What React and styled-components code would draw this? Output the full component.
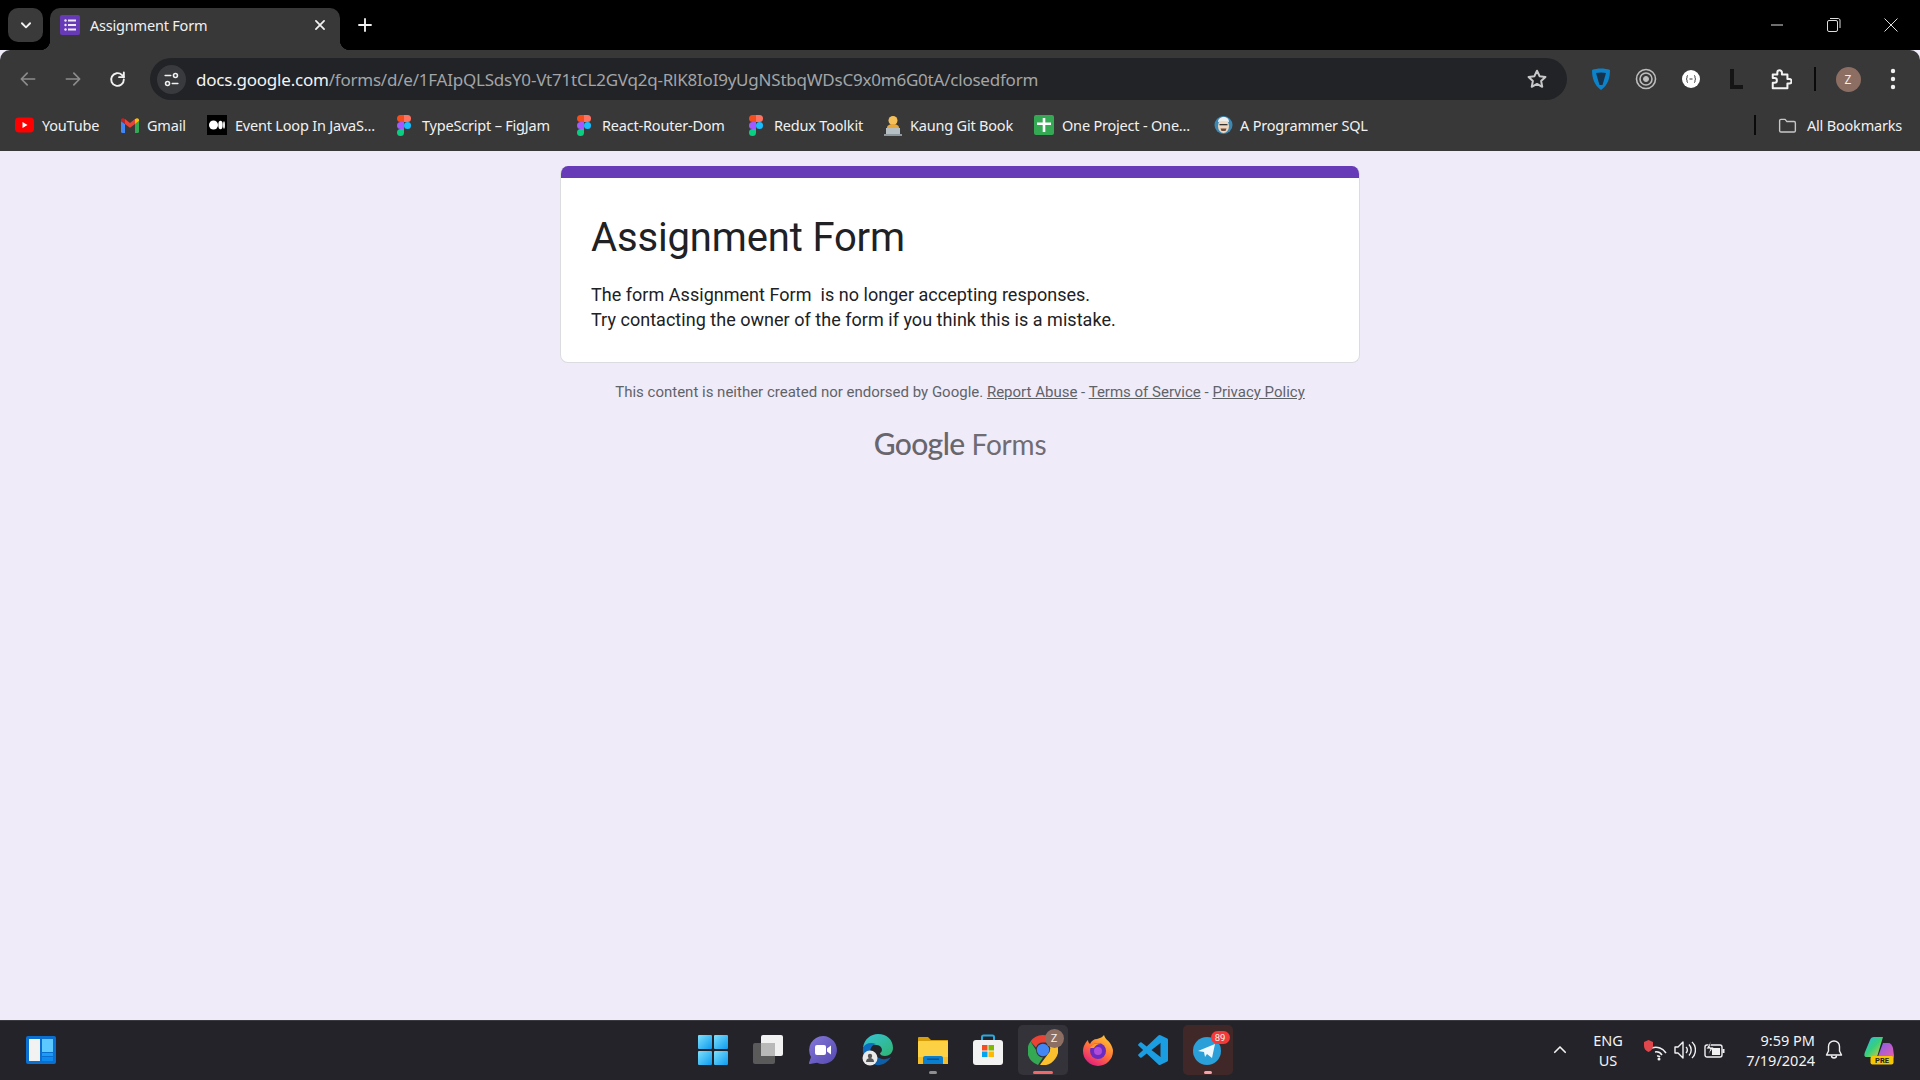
import React from "react";
import styled, { createGlobalStyle } from "styled-components";

const Global = createGlobalStyle`
  html, body { margin: 0; padding: 0; background: #f0ebf8; }
  * { box-sizing: border-box; }
`;
const UI = `"Noto Sans", "Open Sans", sans-serif`;

const Screen = styled.div`
  width: 1920px; height: 1080px; overflow: hidden; display: flex; flex-direction: column;
`;
const TabStrip = styled.div`
  height: 50px; background: #000; display: flex; align-items: flex-start; padding: 8px 0 0 8px; flex: none;
`;
const TabMenu = styled.div`
  width: 35px; height: 34px; border-radius: 10px; background: #3a3a3a; display: flex; align-items: center; justify-content: center; margin-right: 7px;
`;
const Tab = styled.div`
  width: 290px; height: 42px; background: #383838; border-radius: 10px 10px 0 0; display: flex; align-items: center; padding: 0 13px 8px 10px; position: relative;
  &::before, &::after { content: ""; position: absolute; bottom: 0; width: 10px; height: 10px; }
  &::before { left: -10px; background: radial-gradient(circle at 0 0, #000 10px, #383838 10.5px); }
  &::after { right: -10px; background: radial-gradient(circle at 100% 0, #000 10px, #383838 10.5px); }
`;
const TabTitle = styled.span`
  font: 14.5px ${UI}; color: #f1f1f1; margin-left: 10px; flex: 1; letter-spacing: -0.2px;
`;
const NewTab = styled.div`
  width: 30px; height: 34px; margin-left: 10px; display: flex; align-items: center; justify-content: center;
`;
const WindowControls = styled.div`
  margin-left: auto; display: flex; height: 34px; align-items: center; padding-right: 1px;
`;
const WinButton = styled.div`
  width: 57px; display: flex; justify-content: center; align-items: center;
`;
const Chrome = styled.div`
  background: #383838; border-radius: 10px 10px 0 0; flex: none; height: 101px; display: flex; flex-direction: column;
`;
const Toolbar = styled.div`
  height: 58px; display: flex; align-items: center; padding: 8px 0; flex: none;
`;
const NavGroup = styled.div`
  width: 150px; display: flex; padding-left: 5px; flex: none;
`;
const NavButton = styled.div`
  width: 45px; display: flex; justify-content: center; align-items: center;
`;
const AddressBar = styled.div`
  width: 1417px; height: 42px; background: #212327; border-radius: 21px; display: flex; align-items: center; padding: 0 19px 0 7px; flex: none;
`;
const SiteChip = styled.div`
  width: 29px; height: 29px; border-radius: 50%; background: #383a3d; display: flex; align-items: center; justify-content: center; margin-right: 10px; flex: none;
`;
const Url = styled.div`
  font: 17px ${UI}; color: #a3a5a8; flex: 1; white-space: nowrap; letter-spacing: -0.22px;
  b { font-weight: 400; color: #f3f3f3; }
`;
const ExtRow = styled.div`
  display: flex; align-items: center; flex: 1; padding-left: 11px;
`;
const Ext = styled.div`
  width: ${p => p.$w || 45}px; display: flex; justify-content: center; align-items: center; flex: none;
`;
const Divider = styled.div`
  width: 2px; height: ${p => p.$h || 22}px; background: #0a0a0a; flex: none; margin-left: ${p => p.$ml || 0}px;
`;
const Avatar = styled.div`
  width: 25px; height: 25px; border-radius: 50%; background: #8d6e63; color: #f4eeee; font: 12px ${UI}; display: flex; align-items: center; justify-content: center;
`;
const BookmarkBar = styled.div`
  flex: 1; display: flex; align-items: center; padding: 0 18px 9px 15px; gap: 21px;
`;
const Bookmark = styled.div`
  display: flex; align-items: center; gap: ${p => p.$gap || 8}px; font: 14.5px ${UI}; letter-spacing: -0.2px; color: #f1f1f1; white-space: nowrap;
  width: ${p => p.$w}px; flex: none;
`;
const BookmarkEnd = styled.div`
  margin-left: auto; display: flex; align-items: center; gap: 21px;
`;
const Page = styled.main`
  flex: 1; background: #f0ebf8; display: flex; flex-direction: column; align-items: center; padding-top: 15px; font-family: Roboto, sans-serif;
`;
const Card = styled.section`
  width: 800px; height: 197px; background: #fff; border: 1px solid #dadce0; border-top: 0; border-radius: 8px; overflow: hidden; flex: none;
`;
const CardBar = styled.div`
  height: 12px; background: #673ab7; margin: 0 -1px;
`;
const CardBody = styled.div`
  padding: 36px 30px 0;
`;
const Title = styled.h1`
  margin: 0 0 20px; font: 400 40px/48px Roboto, sans-serif; color: #202124; letter-spacing: -0.15px;
`;
const Message = styled.p`
  margin: 0; font: 400 18px/25px Roboto, sans-serif; color: #202124; white-space: pre-wrap; letter-spacing: 0.03px;
`;
const Disclaimer = styled.div`
  margin-top: 19px; font: 400 15px/20px Roboto, sans-serif; color: #5f6368;
  a { color: #5f6368; text-decoration: underline; }
`;
const Logo = styled.div`
  margin-top: 23px; display: flex; align-items: baseline; gap: 7px; color: #68656d;
`;
const LogoGoogle = styled.span`
  font: 500 30px/36px Lato, sans-serif; letter-spacing: -0.6px;
`;
const LogoForms = styled.span`
  font: 400 28px/36px Lato, sans-serif; letter-spacing: -0.2px; color: #6f6c74;
`;
const Taskbar = styled.footer`
  height: 60px; flex: none; background: #24232a; border-top: 1px solid #3a3940; display: grid; grid-template-columns: 1fr auto 1fr; align-items: center; position: relative; padding-bottom: 1px;
`;
const TaskLeft = styled.div`
  padding-left: 26px; display: flex; align-items: center;
`;
const TaskCenter = styled.div`
  display: flex; align-items: center; gap: 5px;
`;
const TaskIcon = styled.div`
  width: 50px; height: 50px; border-radius: 5px; display: flex; align-items: center; justify-content: center; position: relative;
  background: ${p => p.$bg || "transparent"};
  ${p => p.$dot && `&::after { content: ""; position: absolute; bottom: 1px; left: 50%; transform: translateX(-50%); height: 3px; border-radius: 2px; width: ${p.$dotW || 8}px; background: ${p.$dot}; }`}
`;
const Tray = styled.div`
  display: flex; align-items: center; justify-content: flex-end; padding-right: 22px; color: #f3f3f3; font: 14.5px/20px ${UI};
`;
const Lang = styled.div`
  text-align: center; width: 48px; margin: 0 8px 0 9px;
`;
const Clock = styled.div`
  text-align: right; width: 80px; margin-left: 5px;
`;
const TrayIcon = styled.div`
  width: ${p => p.$w || 30}px; margin-left: ${p => p.$ml || 0}px; display: flex; justify-content: center; align-items: center; flex: none;
`;

const Stroke = ({ s = 18, c = "#f1f1f1", w = 2, children, v = 24 }) => (
  <svg width={s} height={s} viewBox={`0 0 ${v} ${v}`} fill="none" stroke={c} strokeWidth={w} strokeLinecap="round" strokeLinejoin="round">{children}</svg>
);
const FormsIcon = () => (
  <svg width="20" height="20" viewBox="0 0 20 20"><rect width="20" height="20" rx="2" fill="#673ab7"/><g fill="#efe9f7"><circle cx="5.5" cy="5.5" r="1.2"/><circle cx="5.5" cy="10" r="1.2"/><circle cx="5.5" cy="14.5" r="1.2"/><rect x="8" y="4.5" width="8" height="2"/><rect x="8" y="9" width="8" height="2"/><rect x="8" y="13.5" width="8" height="2"/></g></svg>
);
const YouTube = () => (
  <svg width="19" height="16" viewBox="0 0 19 16"><rect width="19" height="15" y=".5" rx="4" fill="#f00"/><path d="M7.5 5v6l5-3z" fill="#fff"/></svg>
);
const Gmail = () => (
  <svg width="18" height="15" viewBox="0 0 18 15"><path d="M0 3v10.5A1.5 1.5 0 0 0 1.5 15H4V6z" fill="#4285f4"/><path d="M14 6v9h2.5a1.5 1.5 0 0 0 1.500-1.500V3z" fill="#34a853"/><path d="M14 1v5l4-3V2c0-1.500-1.800-2.300-3-1.300z" fill="#fbbc04"/><path d="M4 6V1l5 4 5-4v5l-5 3.800z" fill="#ea4335"/><path d="M0 2c0-1.500 1.800-2.300 3-1.300L4 1v5L0 3z" fill="#c5221f"/></svg>
);
const Medium = () => (
  <svg width="20" height="20" viewBox="0 0 20 20"><rect width="20" height="20" fill="#000"/><ellipse cx="6.500" cy="10" rx="4.500" ry="4.500" fill="#fff"/><ellipse cx="13.500" cy="10" rx="2.200" ry="4.200" fill="#fff"/><ellipse cx="17" cy="10" rx=".9" ry="3.800" fill="#fff"/></svg>
);
const Figma = () => (
  <svg width="14" height="21" viewBox="0 0 14 21"><path d="M3.500 0H7v7H3.500a3.500 3.500 0 0 1 0-7z" fill="#f24e1e"/><path d="M7 0h3.500a3.500 3.500 0 0 1 0 7H7z" fill="#ff7262"/><path d="M3.500 7H7v7H3.500a3.500 3.500 0 0 1 0-7z" fill="#a259ff"/><circle cx="10.500" cy="10.500" r="3.500" fill="#1abcfe"/><path d="M3.500 14H7v3.500a3.500 3.500 0 1 1-3.500-3.500z" fill="#0acf83"/></svg>
);
const Kaung = () => (
  <svg width="18" height="21" viewBox="0 0 18 21"><circle cx="9" cy="5.500" r="4.500" fill="#f4c05a"/><path d="M3 13c0-3 3-4 6-4s6 1 6 4v1H3z" fill="#e8a93a"/><rect x="2" y="13" width="14" height="7" fill="#b6c0c4"/><rect x="0" y="19" width="18" height="2" fill="#8d999e"/></svg>
);
const GreenCross = () => (
  <svg width="20" height="20" viewBox="0 0 20 20"><rect width="20" height="20" rx="2" fill="#34a853"/><path d="M8.700 3h2.600v4.500H17V10h-5.700v7H8.700v-7H3V7.500h5.700z" fill="#fff"/></svg>
);
const Programmer = () => (
  <svg width="19" height="20" viewBox="0 0 19 20"><circle cx="9.500" cy="10" r="9" fill="#3b88b5"/><ellipse cx="9.500" cy="11" rx="5.500" ry="7" fill="#efd7bf"/><path d="M4 7c0-6 11-7 11 0-3-1.500-8-1.500-11 0z" fill="#eee"/><rect x="5.500" y="9" width="8" height="1.300" fill="#333"/><path d="M6.500 13.500h6l-1 2.500h-4z" fill="#6d4a3a"/></svg>
);
const Folder = () => (
  <Stroke s={23} c="#c7c7c7" w={1.6}><path d="M3 6.500A1.500 1.500 0 0 1 4.500 5h4.800l2 2.500h8.200A1.500 1.500 0 0 1 21 9v9a1.500 1.500 0 0 1-1.500 1.500h-15A1.500 1.500 0 0 1 3 18z"/></Stroke>
);
const bookmarks = [
  { n: "YouTube", i: <YouTube />, w: 85 },
  { n: "Gmail", i: <Gmail />, w: 65 },
  { n: "Event Loop In JavaS...", i: <Medium />, w: 169 },
  { n: "TypeScript – FigJam", i: <Figma />, w: 159, g: 11 },
  { n: "React-Router-Dom", i: <Figma />, w: 151, g: 11 },
  { n: "Redux Toolkit", i: <Figma />, w: 114, g: 11 },
  { n: "Kaung Git Book", i: <Kaung />, w: 129 },
  { n: "One Project - One...", i: <GreenCross />, w: 159 },
  { n: "A Programmer SQL", i: <Programmer />, w: 155, g: 7 },
];
const WinStart = () => (
  <svg width="30" height="30" viewBox="0 0 30 30"><defs><linearGradient id="ws" x1="0" y1="0" x2="1" y2="1"><stop offset="0" stopColor="#7fe0fb"/><stop offset="1" stopColor="#0b9bf0"/></linearGradient></defs><g fill="url(#ws)"><rect width="14" height="14" rx="1"/><rect x="16" width="14" height="14" rx="1"/><rect y="16" width="14" height="14" rx="1"/><rect x="16" y="16" width="14" height="14" rx="1"/></g></svg>
);
const TaskView = () => (
  <svg width="30" height="30" viewBox="0 0 30 30"><rect x="0" y="8" width="22" height="21" rx="2" fill="#5a5a5a"/><rect x="8" y="0" width="22" height="21" rx="2" fill="#f1f1f1"/><rect x="8" y="8" width="14" height="13" fill="#b9b9b9"/></svg>
);
const Meet = () => (
  <svg width="30" height="30" viewBox="0 0 30 30"><defs><linearGradient id="mt" x1="0" y1="0" x2="1" y2="1"><stop offset="0" stopColor="#8478d8"/><stop offset="1" stopColor="#5548b0"/></linearGradient></defs><path d="M15 1a14 14 0 1 1-6 26.700L2 29c-.8 0-1.200-.6-1-1.300L3 22A14 14 0 0 1 15 1z" fill="url(#mt)"/><rect x="7" y="10" width="11" height="10" rx="2" fill="#fff"/><path d="M19 13.500l4-3v9l-4-3z" fill="#fff"/></svg>
);
const Edge = () => (
  <svg width="32" height="32" viewBox="0 0 32 32"><defs><linearGradient id="ed1" x1="0" y1="0" x2="1" y2="1"><stop offset="0" stopColor="#36c5d8"/><stop offset="1" stopColor="#2fb36f"/></linearGradient></defs><path d="M1 14C2 5 9 0 16 0c9 0 15 6 15 14 0 5-4 8-8 8-3 0-5-1-5-3 3-1 3-7-3-8C9 10 3 10 1 14z" fill="url(#ed1)"/><path d="M1 14c2-5 8-6 13-4-5 1-7 6-5 12l2 8C5 28 0 22 1 14z" fill="#0c6dc0"/><path d="M11 30c6 3 14 0 18-7-4 3-11 3-15-1z" fill="#0e5ea8"/><circle cx="8" cy="24" r="7.500" fill="#e9e9e9"/><circle cx="8" cy="22" r="2.200" fill="#555"/><path d="M4 28c0-3 2-4 4-4s4 1 4 4z" fill="#555"/></svg>
);
const Explorer = () => (
  <svg width="30" height="30" viewBox="0 0 30 30"><path d="M0 3a1 1 0 0 1 1-1h9l3 3h17v7H0z" fill="#d69e0d"/><rect y="6" width="30" height="23" rx="1" fill="#fcd244"/><path d="M0 22l0 7h30v-7z" fill="#f5bd2a"/><path d="M5 29v-6a2 2 0 0 1 2-2h16a2 2 0 0 1 2 2v6z" fill="#0a7fd0"/><rect x="9" y="23.500" width="12" height="1.500" fill="#06528c"/></svg>
);
const Store = () => (
  <svg width="30" height="32" viewBox="0 0 30 32"><path d="M9 7V3a1.500 1.500 0 0 1 1.500-1.500h9A1.500 1.500 0 0 1 21 3v4" fill="none" stroke="#2aa9e0" strokeWidth="2"/><rect y="6" width="30" height="25" rx="3" fill="#f2f2f2"/><rect x="9" y="11" width="5.500" height="5.500" fill="#f25022"/><rect x="15.500" y="11" width="5.500" height="5.500" fill="#7fba00"/><rect x="9" y="17.500" width="5.500" height="5.500" fill="#00a4ef"/><rect x="15.500" y="17.500" width="5.500" height="5.500" fill="#ffb900"/></svg>
);
const ChromeIcon = () => (
  <svg width="30" height="30" viewBox="0 0 30 30"><path d="M15 0a15 15 0 0 1 13 7.500H15a7.500 7.500 0 0 0-7 5L2.500 6.500A15 15 0 0 1 15 0z" fill="#ea4335"/><path d="M2.500 6.500L8 15a7.500 7.500 0 0 0 7 7.500L10 30A15 15 0 0 1 2.500 6.500z" fill="#34a853"/><path d="M28 7.500A15 15 0 0 1 12 29.800L20 19a7.500 7.500 0 0 0-1-11.500z" fill="#fbc02d"/><circle cx="15" cy="15" r="6.200" fill="#4285f4"/></svg>
);
const Firefox = () => (
  <svg width="30" height="32" viewBox="0 0 30 32"><defs><linearGradient id="ff" x1=".8" y1="0" x2=".2" y2="1"><stop offset="0" stopColor="#ffcb30"/><stop offset=".5" stopColor="#ff7139"/><stop offset="1" stopColor="#e31587"/></linearGradient></defs><path d="M21 1c1 4 4 5 6 8 2 3 3 6 3 8a15 15 0 0 1-30 0C0 12 3 8 5 6c0 2 1 3 2 4 1-3 4-5 7-5 3-1 6-2 7-4z" fill="url(#ff)"/><circle cx="15" cy="17" r="8" fill="#6a2bc0"/><circle cx="15" cy="17" r="4" fill="#b04ad8"/><path d="M7 14c2-4 7-6 11-4-4 0-6 2-7 4z" fill="#ff9a2b"/></svg>
);
const VSCode = () => (
  <svg width="30" height="30" viewBox="0 0 100 100"><path d="M96 11L75 1a6 6 0 0 0-7 1L29 38 12 25a4 4 0 0 0-5 0l-5 5a4 4 0 0 0 0 6l15 14L2 64a4 4 0 0 0 0 6l5 5a4 4 0 0 0 5 0l17-13 39 36a6 6 0 0 0 7 1l21-10a6 6 0 0 0 4-6V17a6 6 0 0 0-4-6zM75 73L45 50l30-23z" fill="#1b9de2"/></svg>
);
const Telegram = () => (
  <svg width="30" height="30" viewBox="0 0 30 30"><circle cx="14" cy="16" r="14" fill="#2a9fd8"/><path d="M5 16l17-7-3 14-5-4-2 3-1-5z" fill="#eef8fd"/></svg>
);
const Copilot = () => (
  <svg width="30" height="30" viewBox="0 0 30 30"><defs><linearGradient id="cp1" x1="0" y1="0" x2="1" y2="1"><stop offset="0" stopColor="#2cb6f0"/><stop offset=".5" stopColor="#37d07a"/><stop offset="1" stopColor="#f5c738"/></linearGradient><linearGradient id="cp2" x1="0" y1="0" x2="1" y2="1"><stop offset="0" stopColor="#7a5cf0"/><stop offset="1" stopColor="#f25fa8"/></linearGradient></defs><path d="M10 2h9l-6 20H3C0 22 0 20 1 17L6 5c.7-2 2-3 4-3z" fill="url(#cp1)"/><path d="M19 8h5c3 0 4 2 5 5l1 8c0 2-1 3-3 3H13z" fill="url(#cp2)"/><rect x="6.500" y="21" width="23" height="8.500" rx="2" fill="#f6c700"/><text x="18" y="28" fontSize="7.500" fontWeight="700" textAnchor="middle" fontFamily="Roboto, sans-serif" fill="#222">PRE</text></svg>
);
const Badge = styled.span`
  position: absolute; display: flex; align-items: center; justify-content: center; font-family: Roboto, sans-serif; color: #f5eeee;
  top: ${p => p.$top}px; right: ${p => p.$right}px; width: ${p => p.$w}px; height: ${p => p.$h}px; border-radius: ${p => p.$h / 2}px; background: ${p => p.$bg}; font-size: ${p => p.$fs}px;
`;

export default function App() {
  return (
    <Screen>
      <Global />
      <TabStrip>
        <TabMenu><Stroke s={14} w={3.200}><path d="M5 9l7 7 7-7" /></Stroke></TabMenu>
        <Tab>
          <FormsIcon />
          <TabTitle>Assignment Form</TabTitle>
          <Stroke s={14} w={3}><path d="M5 5l14 14M19 5L5 19" /></Stroke>
        </Tab>
        <NewTab><Stroke s={16} w={2.800}><path d="M12 3v18M3 12h18" /></Stroke></NewTab>
        <WindowControls>
          <WinButton><svg width="14" height="14" viewBox="0 0 14 14"><path d="M1 7h12" stroke="#ddd" strokeWidth="1" /></svg></WinButton>
          <WinButton><svg width="14" height="14" viewBox="0 0 14 14" fill="none" stroke="#ddd"><rect x=".5" y="2.500" width="10" height="11" rx="1.500" /><path d="M3 .5h8.500a2 2 0 0 1 1.500 1.500v8" /></svg></WinButton>
          <WinButton><svg width="14" height="14" viewBox="0 0 14 14"><path d="M.5.5l13 13M13.500.5l-13 13" stroke="#ddd" /></svg></WinButton>
        </WindowControls>
      </TabStrip>
      <Chrome>
        <Toolbar>
          <NavGroup>
            <NavButton><Stroke s={20} c="#8c8c8c"><path d="M20 12H5M11 5l-7 7 7 7" /></Stroke></NavButton>
            <NavButton><Stroke s={20} c="#8c8c8c"><path d="M4 12h15M13 5l7 7-7 7" /></Stroke></NavButton>
            <NavButton><Stroke s={19} w={2.400}><path d="M20 12a8 8 0 1 1-2.500-5.800L20 9" /><path d="M20 3v6h-6" /></Stroke></NavButton>
          </NavGroup>
          <AddressBar>
            <SiteChip><Stroke s={19} w={2}><path d="M11 7H4M20 17h-7" /><circle cx="17" cy="7" r="2.500" /><circle cx="7" cy="17" r="2.500" /></Stroke></SiteChip>
            <Url><b>docs.google.com</b>/forms/d/e/1FAIpQLSdsY0-Vt71tCL2GVq2q-RlK8IoI9yUgNStbqWDsC9x0m6G0tA/closedform</Url>
            <Stroke s={22} c="#c8c8c8" w={2.200}><path d="M12 3l2.800 5.900 6.400.8-4.700 4.400 1.200 6.400L12 17.400l-5.700 3.100 1.200-6.400-4.700-4.400 6.400-.8z" /></Stroke>
          </AddressBar>
          <ExtRow>
            <Ext>
              <svg width="20" height="24" viewBox="0 0 20 24"><path d="M1 3c5-2 13-2 18 0 0 8-2 15-9 20C3 18 1 11 1 3z" fill="#0b82c9" /><path d="M5 6c3-.7 7-.7 10 0l-3.500 12h-3z" fill="#16324a" /></svg>
            </Ext>
            <Ext>
              <svg width="22" height="24" viewBox="0 0 22 24" fill="none" stroke="#bdbdbd"><circle cx="11" cy="12" r="9.500" strokeWidth="1.600" /><circle cx="11" cy="12" r="6" strokeWidth="1.600" /><circle cx="11" cy="12" r="2.500" fill="#bdbdbd" /></svg>
            </Ext>
            <Ext>
              <svg width="18" height="18" viewBox="0 0 18 18"><circle cx="9" cy="9" r="9" fill="#fff" /><path d="M6 5.500c-1 0-1 1-1 2s-.5 1.500-1 1.500c.5 0 1 .5 1 1.500s0 2 1 2M12 5.500c1 0 1 1 1 2s.5 1.500 1 1.500c-.5 0-1 .5-1 1.500s0 2-1 2M7.500 9h3" stroke="#333" strokeWidth="1" fill="none" /></svg>
            </Ext>
            <Ext>
              <svg width="14" height="20" viewBox="0 0 14 20"><path d="M1 0h4v16h9v4H1z" fill="#151515" /></svg>
            </Ext>
            <Ext $w={45}>
              <svg width="22" height="22" viewBox="0 0 24 24" fill="none" stroke="#f3f3f3" strokeWidth="2.200" strokeLinejoin="round"><path d="M3 7h5V5a2.500 2.500 0 0 1 5 0v2h6v5h2a2.500 2.500 0 0 1 0 5h-2v5H3v-6h2a2.500 2.500 0 0 0 0-5H3z" /></svg>
            </Ext>
            <Divider $h={24} $ml={11} />
            <Ext $w={64}><Avatar>Z</Avatar></Ext>
            <Ext $w={26}><svg width="6" height="22" viewBox="0 0 6 22" fill="#f1f1f1"><circle cx="3" cy="3" r="2.200" /><circle cx="3" cy="11" r="2.200" /><circle cx="3" cy="19" r="2.200" /></svg></Ext>
          </ExtRow>
        </Toolbar>
        <BookmarkBar>
          {bookmarks.map((b) => (
            <Bookmark key={b.n} $w={b.w} $gap={b.g}>{b.i}<span>{b.n}</span></Bookmark>
          ))}
          <BookmarkEnd>
            <Divider $h={20} />
            <Bookmark $w={125} $gap={9}><Folder /><span>All Bookmarks</span></Bookmark>
          </BookmarkEnd>
        </BookmarkBar>
      </Chrome>
      <Page>
        <Card>
          <CardBar />
          <CardBody>
            <Title>Assignment Form</Title>
            <Message>{"The form Assignment Form  is no longer accepting responses.\nTry contacting the owner of the form if you think this is a mistake."}</Message>
          </CardBody>
        </Card>
        <Disclaimer>
          This content is neither created nor endorsed by Google. <a href="#a">Report Abuse</a> - <a href="#b">Terms of Service</a> - <a href="#c">Privacy Policy</a>
        </Disclaimer>
        <Logo><LogoGoogle>Google</LogoGoogle><LogoForms>Forms</LogoForms></Logo>
      </Page>
      <Taskbar>
        <TaskLeft>
          <svg width="30" height="28" viewBox="0 0 30 28"><rect width="30" height="28" rx="2" fill="#0b6fd0" /><rect x="3" y="3" width="11" height="22" fill="#f2f2f2" /><rect x="16" y="3" width="11" height="13" fill="#5ccaff" /><rect x="16" y="17" width="11" height="3" fill="#1c9cf4" /><rect x="16" y="21" width="11" height="4" fill="#0f8bf0" /></svg>
        </TaskLeft>
        <TaskCenter>
          <TaskIcon><WinStart /></TaskIcon>
          <TaskIcon><TaskView /></TaskIcon>
          <TaskIcon><Meet /></TaskIcon>
          <TaskIcon><Edge /></TaskIcon>
          <TaskIcon $dot="#8f8f8f"><Explorer /></TaskIcon>
          <TaskIcon><Store /></TaskIcon>
          <TaskIcon $bg="#34333a" $dot="#f0696a" $dotW={20}>
            <ChromeIcon />
            <Badge $top={4} $right={4} $w={19} $h={19} $bg="#8d6e63" $fs={11}>Z</Badge>
          </TaskIcon>
          <TaskIcon><Firefox /></TaskIcon>
          <TaskIcon><VSCode /></TaskIcon>
          <TaskIcon $bg="#402829" $dot="#f5a3a8">
            <Telegram />
            <Badge $top={6} $right={3} $w={19} $h={13} $bg="#f23a3a" $fs={9.500}>89</Badge>
          </TaskIcon>
        </TaskCenter>
        <Tray>
          <TrayIcon><Stroke s={18} w={2.200}><path d="M5 15l7-7 7 7" /></Stroke></TrayIcon>
          <Lang>ENG<br />US</Lang>
          <TrayIcon>
            <svg width="24" height="22" viewBox="0 0 24 22" fill="none" stroke="#f1f1f1" strokeWidth="1.500"><path d="M9 9a12 12 0 0 1 14 5M12 13a7 7 0 0 1 7 3M14 17a3 3 0 0 1 3 1" /><path d="M1 3l4.500-2L10 3v4c0 3-2 5-4.500 6C3 12 1 10 1 7z" fill="#e0474c" stroke="none" /><circle cx="16" cy="20" r="1.500" fill="#f1f1f1" stroke="none" /></svg>
          </TrayIcon>
          <TrayIcon>
            <svg width="22" height="20" viewBox="0 0 22 20" fill="none" stroke="#f1f1f1" strokeWidth="1.400" strokeLinejoin="round"><path d="M1 7h3l5-5v16l-5-5H1z" /><path d="M12 7a4 4 0 0 1 0 6M15 4.500a8 8 0 0 1 0 11M18 2a11 11 0 0 1 0 16" /></svg>
          </TrayIcon>
          <TrayIcon>
            <svg width="22" height="18" viewBox="0 0 22 18" fill="none" stroke="#f1f1f1" strokeWidth="1.400"><rect x="1" y="4" width="17" height="12" rx="2" /><rect x="18.500" y="8" width="2" height="4" fill="#f1f1f1" stroke="none" /><path d="M7 0L2 8h4l-2 6 6-8H6z" fill="#f1f1f1" stroke="#24232a" strokeWidth=".8" /><rect x="8" y="7" width="8" height="7" fill="#f1f1f1" stroke="none" /></svg>
          </TrayIcon>
          <Clock>9:59 PM<br />7/19/2024</Clock>
          <TrayIcon $w={38}>
            <svg width="18" height="20" viewBox="0 0 18 20" fill="none" stroke="#f1f1f1" strokeWidth="1.400" strokeLinejoin="round"><path d="M9 1a5.500 5.500 0 0 1 5.500 5.500V11l2 4h-15l2-4V6.500A5.500 5.500 0 0 1 9 1z" /><path d="M6.500 15.500a2.500 2.500 0 0 0 5 0" /></svg>
          </TrayIcon>
          <TrayIcon $w={38} $ml={7}><Copilot /></TrayIcon>
        </Tray>
      </Taskbar>
    </Screen>
  );
}
